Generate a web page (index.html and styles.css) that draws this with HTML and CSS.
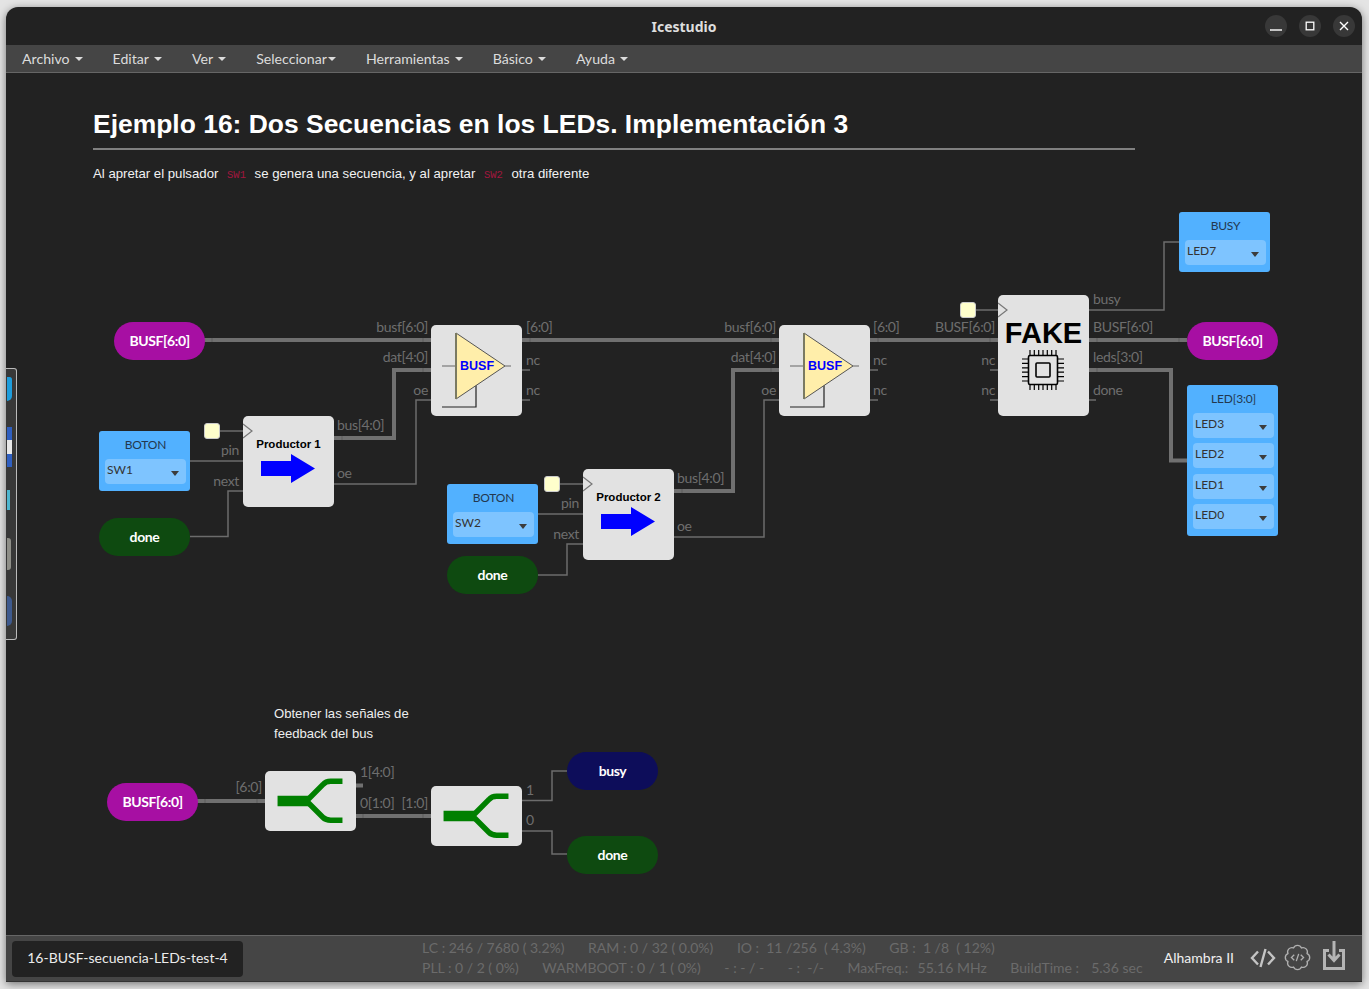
FILE: index.html
```html
<!DOCTYPE html>
<html lang="es">
<head>
    <meta charset="UTF-8">
    <title>Icestudio</title>
    <link rel="stylesheet" href="styles.css">
</head>
<body>
<div class="window">
    <header class="titlebar">
        <span class="title">Icestudio</span>
        <div class="win-buttons">
            <span class="win-btn"><svg width="12" height="12" viewBox="0 0 12 12"><path d="M0 10H12" stroke="#fff" stroke-width="1.4"/></svg></span>
            <span class="win-btn"><svg width="12" height="12" viewBox="0 0 12 12"><rect x="2.2" y="2.2" width="7.6" height="7.6" fill="none" stroke="#fff" stroke-width="1.3"/></svg></span>
            <span class="win-btn"><svg width="12" height="12" viewBox="0 0 12 12"><path d="M2 2L10 10M10 2L2 10" stroke="#fff" stroke-width="1.4"/></svg></span>
        </div>
    </header>

    <nav class="menubar">
        <span class="menu-item">Archivo<i class="caret"></i></span>
        <span class="menu-item">Editar<i class="caret"></i></span>
        <span class="menu-item">Ver<i class="caret"></i></span>
        <span class="menu-item">Seleccionar<i class="caret caret-tight"></i></span>
        <span class="menu-item">Herramientas<i class="caret"></i></span>
        <span class="menu-item">Básico<i class="caret"></i></span>
        <span class="menu-item">Ayuda<i class="caret"></i></span>
    </nav>

    <main class="canvas">
        <!-- cables y etiquetas de puertos, en coordenadas de pantalla -->
        <svg class="wires" width="1356" height="862" viewBox="6 73 1356 862">
            <g class="wire-bus">
                <path d="M204 340H431"/>
                <path d="M522 340H779"/>
                <path d="M870 340H998"/>
                <path d="M1089 340H1187"/>
                <path d="M334 438H394V370H431"/>
                <path d="M674 491H733V370H779"/>
                <path d="M1089 370H1171V460.500H1187"/>
                <path d="M197 801H265"/>
                <path d="M355 785.500H363"/>
                <path d="M355 816H431"/>
            </g>
            <g class="wire">
                <path d="M220 431H243"/>
                <path d="M560 484H583"/>
                <path d="M976 310H998"/>
                <path d="M190 461H243"/>
                <path d="M538 514H583"/>
                <path d="M190 536.500H228V491H243"/>
                <path d="M538 575H567V544H583"/>
                <path d="M334 484H416V400H431"/>
                <path d="M674 537H764V400H779"/>
                <path d="M522 370H530M522 400H530"/>
                <path d="M870 370H878M870 400H878"/>
                <path d="M990 370H998M990 400H998"/>
                <path d="M1089 400H1096"/>
                <path d="M1089 310H1164V242H1179"/>
                <path d="M522 800.500H552V771H567"/>
                <path d="M522 831H552V854H567"/>
            </g>
            <g class="tick">
                <path d="M212 338V342M423 338V342M530 338V342M771 338V342M878 338V342M990 338V342M1097 338V342M1179 338V342"/>
                <path d="M342 436V440M423 368V372M682 489V493M771 368V372M1097 368V372"/>
                <path d="M205 799V803M257 799V803M363 814V818M423 814V818"/>
            </g>

            <g class="port-label">
                <text x="428" y="332" text-anchor="end">busf[6:0]</text>
                <text x="428" y="362" text-anchor="end">dat[4:0]</text>
                <text x="428" y="395" text-anchor="end">oe</text>
                <text x="526" y="332">[6:0]</text>
                <text x="526" y="365">nc</text>
                <text x="526" y="395">nc</text>
                <text x="776" y="332" text-anchor="end">busf[6:0]</text>
                <text x="776" y="362" text-anchor="end">dat[4:0]</text>
                <text x="776" y="395" text-anchor="end">oe</text>
                <text x="873" y="332">[6:0]</text>
                <text x="873" y="365">nc</text>
                <text x="873" y="395">nc</text>
                <text x="239" y="455" text-anchor="end">pin</text>
                <text x="239" y="486" text-anchor="end">next</text>
                <text x="337" y="430">bus[4:0]</text>
                <text x="337" y="478">oe</text>
                <text x="579" y="508" text-anchor="end">pin</text>
                <text x="579" y="539" text-anchor="end">next</text>
                <text x="677" y="483">bus[4:0]</text>
                <text x="677" y="531">oe</text>
                <text x="995" y="332" text-anchor="end">BUSF[6:0]</text>
                <text x="995" y="365" text-anchor="end">nc</text>
                <text x="995" y="395" text-anchor="end">nc</text>
                <text x="1093" y="304">busy</text>
                <text x="1093" y="332">BUSF[6:0]</text>
                <text x="1093" y="362">leds[3:0]</text>
                <text x="1093" y="395">done</text>
                <text x="262" y="792" text-anchor="end">[6:0]</text>
                <text x="360" y="777">1[4:0]</text>
                <text x="360" y="808">0[1:0]</text>
                <text x="428" y="808" text-anchor="end">[1:0]</text>
                <text x="526" y="795">1</text>
                <text x="526" y="825">0</text>
            </g>
        </svg>

        <section class="note">
            <h1>Ejemplo 16: Dos Secuencias en los LEDs. Implementación 3</h1>
            <hr>
            <p>Al apretar el pulsador <code>SW1</code> se genera una secuencia, y al apretar <code>SW2</code> otra diferente</p>
        </section>

        <p class="note-small">Obtener las señales de<br>feedback del bus</p>

        <!-- etiquetas de entrada y salida -->
        <div class="pill pill-bus at-bus-in">BUSF[6:0]</div>
        <div class="pill pill-bus at-bus-out">BUSF[6:0]</div>
        <div class="pill pill-bus at-bus-low">BUSF[6:0]</div>
        <div class="pill pill-done at-done-1">done</div>
        <div class="pill pill-done at-done-2">done</div>
        <div class="pill pill-done at-done-low">done</div>
        <div class="pill pill-busy at-busy-low">busy</div>

        <!-- pines -->
        <div class="pin-box at-boton-1">
            <div class="pin-name">BOTON</div>
            <div class="pin-select">SW1<i class="pin-caret"></i></div>
        </div>
        <div class="pin-box at-boton-2">
            <div class="pin-name">BOTON</div>
            <div class="pin-select">SW2<i class="pin-caret"></i></div>
        </div>
        <div class="pin-box at-busy">
            <div class="pin-name">BUSY</div>
            <div class="pin-select">LED7<i class="pin-caret"></i></div>
        </div>
        <div class="pin-box pin-box-leds at-leds">
            <div class="pin-name">LED[3:0]</div>
            <div class="pin-select">LED3<i class="pin-caret"></i></div>
            <div class="pin-select">LED2<i class="pin-caret"></i></div>
            <div class="pin-select">LED1<i class="pin-caret"></i></div>
            <div class="pin-select">LED0<i class="pin-caret"></i></div>
        </div>

        <!-- relojes -->
        <div class="clock at-clock-1"></div>
        <div class="clock at-clock-2"></div>
        <div class="clock at-clock-3"></div>

        <!-- bloques -->
        <div class="block block-prod at-prod-1">
            <svg class="clk-mark" width="11" height="16" viewBox="0 0 11 16"><path d="M0 1L9 8L0 15" fill="none" stroke="#777" stroke-width="1.2"/></svg>
            <span class="block-title">Productor 1</span>
            <svg width="56" height="31" viewBox="0 0 56 31"><path d="M1 8H31V1L55 15.500L31 30V23H1Z" fill="#0000ff"/></svg>
        </div>
        <div class="block block-prod at-prod-2">
            <svg class="clk-mark" width="11" height="16" viewBox="0 0 11 16"><path d="M0 1L9 8L0 15" fill="none" stroke="#777" stroke-width="1.2"/></svg>
            <span class="block-title">Productor 2</span>
            <svg width="56" height="31" viewBox="0 0 56 31"><path d="M1 8H31V1L55 15.500L31 30V23H1Z" fill="#0000ff"/></svg>
        </div>

        <div class="block at-tri-1">
            <svg width="91" height="91" viewBox="0 0 91 91">
                <path d="M11 41H25M74 41H80" stroke="#666" stroke-width="1.2"/>
                <path d="M45 60V82H11" fill="none" stroke="#222" stroke-width="1.2"/>
                <path d="M25 8L74 41L25 74Z" fill="#ffeeaa" stroke="#555" stroke-width="1"/>
                <path d="M25 8V74" stroke="#7a7a62" stroke-width="2"/>
                <text class="tri-text" x="46" y="44.500" text-anchor="middle">BUSF</text>
            </svg>
        </div>
        <div class="block at-tri-2">
            <svg width="91" height="91" viewBox="0 0 91 91">
                <path d="M11 41H25M74 41H80" stroke="#666" stroke-width="1.2"/>
                <path d="M45 60V82H11" fill="none" stroke="#222" stroke-width="1.2"/>
                <path d="M25 8L74 41L25 74Z" fill="#ffeeaa" stroke="#555" stroke-width="1"/>
                <path d="M25 8V74" stroke="#7a7a62" stroke-width="2"/>
                <text class="tri-text" x="46" y="44.500" text-anchor="middle">BUSF</text>
            </svg>
        </div>

        <div class="block block-fake at-fake">
            <svg class="clk-mark" width="11" height="16" viewBox="0 0 11 16"><path d="M0 1L9 8L0 15" fill="none" stroke="#777" stroke-width="1.2"/></svg>
            <span class="fake-title">FAKE</span>
            <svg width="42" height="42" viewBox="0 0 42 42" fill="none" stroke="#000">
                <rect x="6.500" y="6.500" width="29" height="29" rx="1.500" stroke-width="1.6"/>
                <rect x="14" y="14" width="14" height="14" rx="1" stroke-width="1.6"/>
                <path stroke-width="1.2" d="M8 1V6M12.300 1V6M16.700 1V6M21 1V6M25.300 1V6M29.700 1V6M34 1V6M8 36V41M12.300 36V41M16.700 36V41M21 36V41M25.300 36V41M29.700 36V41M34 36V41"/>
                <path stroke-width="1.2" d="M0 10H6M0 14.400H6M0 18.800H6M0 23.200H6M0 27.600H6M0 32H6M36 10H42M36 14.400H42M36 18.800H42M36 23.200H42M36 27.600H42M36 32H42"/>
            </svg>
        </div>

        <div class="block at-split-1">
            <svg width="91" height="61" viewBox="0 0 91 61" fill="none" stroke="#008000">
                <path d="M12 30.500H45" stroke-width="10.500"/>
                <path d="M42 30L58 14Q61 10.500 66 10.500H78M42 31L58 47Q61 50 66 50H78" stroke-width="5.500"/>
            </svg>
        </div>
        <div class="block at-split-2">
            <svg width="91" height="61" viewBox="0 0 91 61" fill="none" stroke="#008000">
                <path d="M12 30.500H45" stroke-width="10.500"/>
                <path d="M42 30L58 14Q61 10.500 66 10.500H78M42 31L58 47Q61 50 66 50H78" stroke-width="5.500"/>
            </svg>
        </div>
    </main>

    <footer class="statusbar">
        <div class="file-name">16-BUSF-secuencia-LEDs-test-4</div>
        <div class="stats">
            <div class="stats-row">
                <span>LC : 246 / 7680 ( 3.2%)</span>
                <span>RAM : 0 / 32 ( 0.0%)</span>
                <span>IO :  11 /256  ( 4.3%)</span>
                <span>GB :  1 /8  ( 12%)</span>
            </div>
            <div class="stats-row">
                <span>PLL : 0 / 2 ( 0%)</span>
                <span>WARMBOOT : 0 / 1 ( 0%)</span>
                <span>- : - / -</span>
                <span>- :  -/-</span>
                <span>MaxFreq.:  <span class="stat-val">55.16 MHz</span></span>
                <span>BuildTime :  <span class="stat-val stat-val-wide">5.36 sec</span></span>
            </div>
        </div>
        <div class="tools">
            <span class="board">Alhambra II</span>
            <svg class="tool-code" width="26" height="22" viewBox="0 0 26 22" fill="none" stroke="#c4c4c4" stroke-width="2.400"><path d="M8 4.500L2 11L8 17.500M18 4.500L24 11L18 17.500M15.500 2L10.500 20"/></svg>
            <svg class="tool-gear" width="29" height="29" viewBox="0 0 24 24" fill="none" stroke="#b0b0b0" stroke-width="1.100">
                <path d="M8.709 4.055A3.600 3.600 0 0 1 15.291 4.055A3.600 3.600 0 0 1 19.945 8.709A3.600 3.600 0 0 1 19.945 15.291A3.600 3.600 0 0 1 15.291 19.945A3.600 3.600 0 0 1 8.709 19.945A3.600 3.600 0 0 1 4.055 15.291A3.600 3.600 0 0 1 4.055 8.709A3.600 3.600 0 0 1 8.709 4.055Z"/>
                <path d="M9.300 9.800L7 12L9.300 14.200M14.700 9.800L17 12L14.700 14.200M13 9L11 15"/>
            </svg>
            <svg class="tool-save" width="22" height="29" viewBox="0 0 22 29" fill="none" stroke="#b4b4b4" stroke-width="3"><path d="M6 9.500H1.500V27.500H20.500V9.500H16"/><path d="M11 0V19M5.500 13.500L11 19.500L16.500 13.500"/></svg>
        </div>
    </footer>

    <!-- trozo del dock del escritorio que asoma por la izquierda -->
    <div class="dock">
        <i class="dock-icon dock-a"></i>
        <i class="dock-icon dock-b"></i>
        <i class="dock-icon dock-c"></i>
        <i class="dock-icon dock-d"></i>
        <i class="dock-icon dock-e"></i>
    </div>
</div>
</body>
</html>
```

FILE: styles.css
```css
* { box-sizing: border-box; }
html, body {
    margin: 0;
    padding: 0;
    height: 989px;
    overflow: hidden;
    background-color: #e4e4e4;
    font-family: Lato, "Noto Sans", sans-serif;
}

/* ventana */
.window {
    position: relative;
    display: flex;
    flex-direction: column;
    width: 1356px;
    height: 975px;
    margin: 7px 0 0 6px;
    background-color: #222;
    border-radius: 12px 12px 2px 2px;
    box-shadow: 0 2px 9px rgba(0, 0, 0, 0.5);
}
.titlebar {
    position: relative;
    display: flex;
    align-items: center;
    justify-content: center;
    height: 38px;
    flex: none;
}
.title {
    font-family: "Noto Sans", sans-serif;
    font-size: 14px;
    font-weight: bold;
    color: #dedede;
}
.win-buttons {
    position: absolute;
    right: 7px;
    top: 8px;
    display: flex;
    gap: 12px;
}
.win-btn {
    display: flex;
    align-items: center;
    justify-content: center;
    width: 22px;
    height: 22px;
    border-radius: 50%;
    background-color: #383838;
}

/* menu */
.menubar {
    display: flex;
    align-items: center;
    flex: none;
    height: 28px;
    padding-left: 1px;
    background-color: #454545;
    border-bottom: 1px solid #666;
}
.menu-item {
    display: flex;
    align-items: center;
    padding: 0 15px;
    font-size: 14.150px;
    color: #dcdcdc;
}
.caret {
    width: 0;
    height: 0;
    margin-left: 5px;
    border-top: 4px solid #dcdcdc;
    border-left: 4px solid transparent;
    border-right: 4px solid transparent;
}
.caret-tight { margin-left: 1px; }

/* lienzo */
.canvas {
    position: relative;
    flex: 1;
    overflow: hidden;
}
.wires {
    position: absolute;
    left: 0;
    top: 0;
}
.wire-bus path {
    fill: none;
    stroke: #707070;
    stroke-width: 4;
}
.wire path {
    fill: none;
    stroke: #6c6c6c;
    stroke-width: 1.5;
}
.tick path {
    fill: none;
    stroke: #5c5c5c;
    stroke-width: 1;
}
.port-label {
    font-family: Lato, sans-serif;
    font-size: 14px;
    letter-spacing: -0.35px;
    fill: #6e6e6e;
}

/* notas */
.note {
    position: absolute;
    left: 87px;
    top: 33px;
    width: 1042px;
    color: #f2f2f2;
    font-family: "Liberation Sans", Arial, sans-serif;
}
.note h1 {
    margin: 0;
    font-size: 26.450px;
    line-height: 36px;
    color: #fff;
}
.note hr {
    height: 1.500px;
    margin: 6px 0 0;
    border: 0;
    background-color: #808080;
}
.note p {
    margin: 15px 0 0;
    font-size: 13.200px;
    line-height: 18px;
}
.note code {
    margin: 0 5px;
    font-family: "Liberation Mono", monospace;
    font-size: 10.500px;
    color: #a3163f;
}
.note-small {
    position: absolute;
    left: 268px;
    top: 631px;
    margin: 0;
    font-family: "Liberation Sans", Arial, sans-serif;
    font-size: 13.100px;
    line-height: 20px;
    color: #eee;
}

/* etiquetas */
.pill {
    position: absolute;
    display: flex;
    align-items: center;
    justify-content: center;
    width: 91px;
    height: 38px;
    padding-bottom: 2px;
    border-radius: 19px;
    font-size: 14px;
    font-weight: bold;
    letter-spacing: -0.4px;
    color: #fff;
}
.pill-bus { background-color: #a70fa3; }
.pill-done { background-color: #0e4a10; }
.pill-busy { background-color: #0d0d5a; }

.at-bus-in { left: 108px; top: 249px; }
.at-bus-out { left: 1181px; top: 249px; }
.at-bus-low { left: 101px; top: 710px; }
.at-done-1 { left: 93px; top: 445px; }
.at-done-2 { left: 441px; top: 483px; }
.at-done-low { left: 561px; top: 763px; }
.at-busy-low { left: 561px; top: 679px; }

/* pines */
.pin-box {
    position: absolute;
    width: 91px;
    height: 60px;
    padding: 6px 4px 6px 6px;
    background-color: #52b1ff;
    border-radius: 3px;
}
.pin-box-leds {
    height: 151px;
    padding-bottom: 0;
}
.pin-name {
    height: 22px;
    text-align: center;
    font-size: 12px;
    line-height: 15px;
    letter-spacing: -0.2px;
    color: #23384f;
}
.pin-select {
    position: relative;
    height: 25px;
    margin-bottom: 5.300px;
    padding: 2px 2px;
    background-color: #7ec4ff;
    border-radius: 4px;
    font-size: 12px;
    line-height: 18px;
    color: #333;
}
.pin-caret {
    position: absolute;
    right: 7px;
    top: 12px;
    border-top: 5px solid #3c3c3c;
    border-left: 4px solid transparent;
    border-right: 4px solid transparent;
}
.at-boton-1 { left: 93px; top: 358px; }
.at-boton-2 { left: 441px; top: 411px; }
.at-busy { left: 1173px; top: 139px; }
.at-leds { left: 1181px; top: 312px; }

/* relojes */
.clock {
    position: absolute;
    width: 16px;
    height: 16px;
    background-color: #ffffcc;
    border: 1px solid #ccc;
    border-radius: 3px;
}
.at-clock-1 { left: 198px; top: 350px; }
.at-clock-2 { left: 538px; top: 403px; }
.at-clock-3 { left: 954px; top: 229px; }

/* bloques */
.block {
    position: absolute;
    display: flex;
    flex-direction: column;
    align-items: center;
    width: 91px;
    height: 91px;
    background-color: #e2e2e2;
    border-radius: 5px;
}
.block-prod { padding-top: 21px; }
.block-prod > svg:last-child { margin-top: 2px; margin-left: -2px; }
.block-title {
    font-family: "Liberation Sans", Arial, sans-serif;
    font-size: 11.500px;
    font-weight: bold;
    line-height: 14px;
    color: #000;
}
.clk-mark {
    position: absolute;
    left: 0;
    top: 7px;
}
.tri-text {
    font-family: "Liberation Sans", Arial, sans-serif;
    font-size: 12.500px;
    font-weight: bold;
    fill: #0000ff;
}
.block-fake {
    height: 121px;
    padding-top: 21px;
}
.fake-title {
    font-family: "Liberation Sans", Arial, sans-serif;
    font-size: 29px;
    font-weight: bold;
    line-height: 34px;
    color: #000;
}
.block-fake > svg:last-child { margin-top: -1px; margin-left: -1px; }

.at-prod-1 { left: 237px; top: 343px; }
.at-prod-2 { left: 577px; top: 396px; }
.at-tri-1 { left: 425px; top: 252px; }
.at-tri-2 { left: 773px; top: 252px; }
.at-fake { left: 992px; top: 222px; }
.at-split-1 { left: 259px; top: 698px; height: 60px; }
.at-split-2 { left: 425px; top: 713px; height: 60px; }

/* barra de estado */
.statusbar {
    display: flex;
    align-items: center;
    flex: none;
    height: 47px;
    padding: 0 17px 2px 6px;
    background-color: #454545;
    border-top: 1px solid #666;
    border-bottom: 1px solid #333;
}
.file-name {
    flex: none;
    width: 231px;
    height: 36px;
    margin-bottom: -2px;
    background-color: #222;
    border-radius: 4px;
    text-align: center;
    font-size: 14px;
    line-height: 34px;
    color: #ececec;
}
.stats {
    margin-left: 179px;
    font-size: 14px;
    line-height: 20px;
    color: #6b6b6b;
}
.stats-row {
    display: flex;
    gap: 23.600px;
    white-space: pre;
}
.stat-val { margin-left: 2px; }
.stat-val-wide { margin-left: 5px; }
.tools {
    display: flex;
    align-items: center;
    margin-left: auto;
}
.board {
    margin-right: 16px;
    font-size: 14px;
    color: #f0f0f0;
}
.tool-gear { margin: 0 11px 0 7px; }
.tool-save { margin-top: -4px; }

/* dock */
.dock {
    position: absolute;
    left: 0;
    top: 361px;
    width: 11px;
    height: 272px;
    background-color: #383838;
    border: 1px solid #bbb;
    border-left: 0;
    border-radius: 0 3px 3px 0;
}
.dock-icon {
    position: absolute;
    left: 1px;
    display: block;
}
.dock-a { top: 8px; width: 5px; height: 24px; background-color: #1e9ddc; border-radius: 0 3px 6px 0; }
.dock-b { top: 58px; width: 5px; height: 40px; background: linear-gradient(#2f5fc0 32%, #e8e8e8 32%, #e8e8e8 68%, #2f5fc0 68%); }
.dock-c { top: 121px; width: 3px; height: 20px; background-color: #4fb6cf; }
.dock-d { top: 169px; width: 4px; height: 32px; background-color: #8f8f88; border-radius: 0 3px 3px 0; }
.dock-e { top: 227px; width: 5px; height: 30px; background-color: #3e5a8e; border-radius: 0 15px 15px 0; }
```
